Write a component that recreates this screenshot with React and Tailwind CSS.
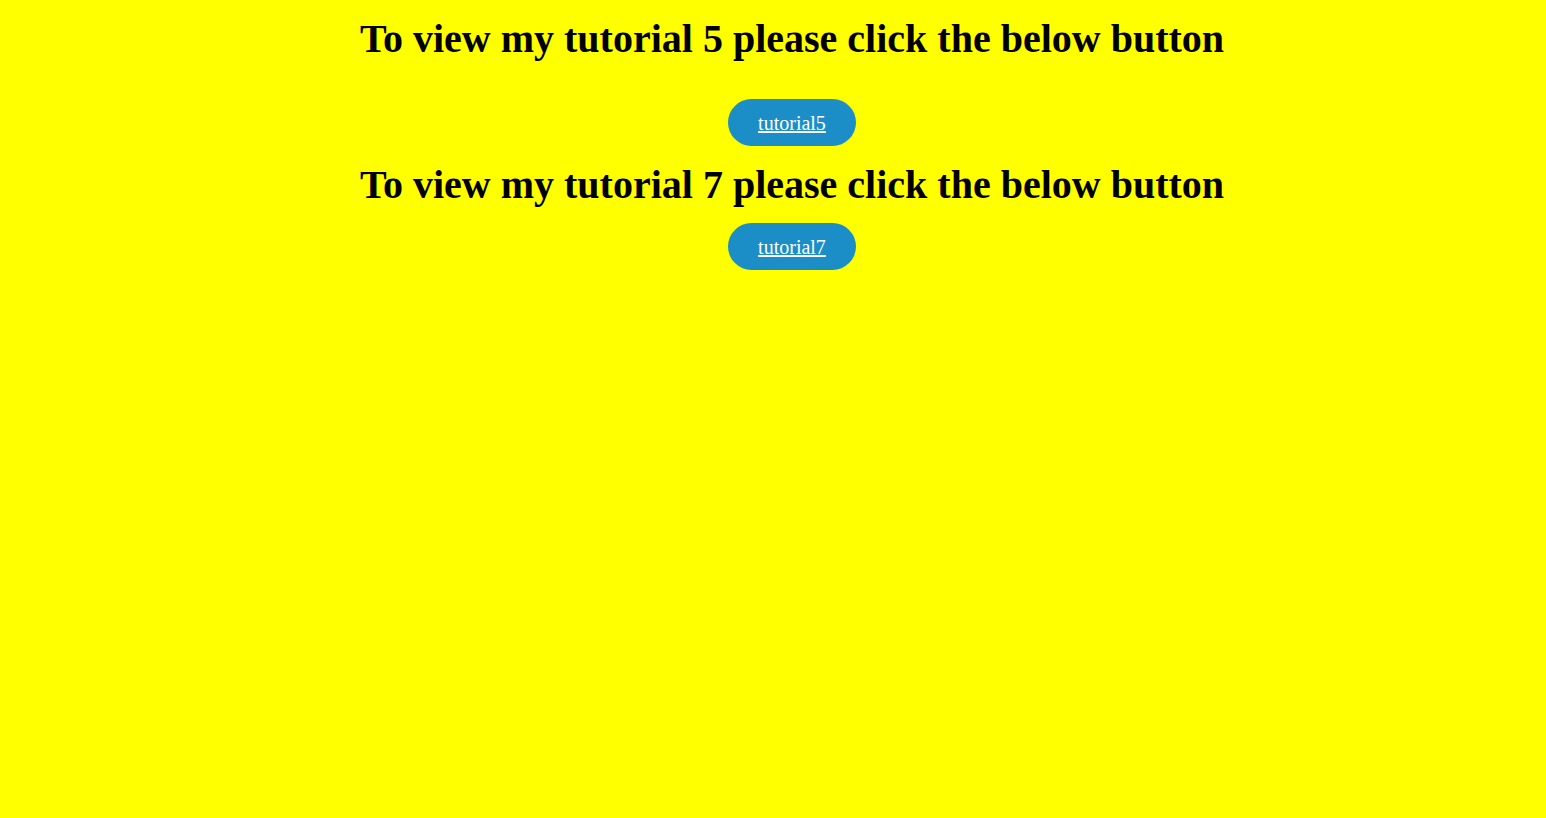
export default function App() {
  return (
    <div className="min-h-[818px] bg-[#ffff00] pl-[38px] text-center" style={{ fontFamily: '"Liberation Serif", serif' }}>
      <h1 className="pt-[16px] text-[40px] font-bold leading-[46px] text-black">To view my tutorial 5 please click the below button</h1>
      <div className="mt-[37px] flex justify-center">
        <a href="#" className="block rounded-full bg-[#1b8ec8] px-[30px] pt-[13px] pb-[11px] text-[20px] leading-[23px] text-white underline">tutorial5</a>
      </div>
      <h1 className="mt-[16px] text-[40px] font-bold leading-[46px] text-black">To view my tutorial 7 please click the below button</h1>
      <div className="mt-[15px] flex justify-center">
        <a href="#" className="block rounded-full bg-[#1b8ec8] px-[30px] pt-[13px] pb-[11px] text-[20px] leading-[23px] text-white underline">tutorial7</a>
      </div>
    </div>
  );
}
